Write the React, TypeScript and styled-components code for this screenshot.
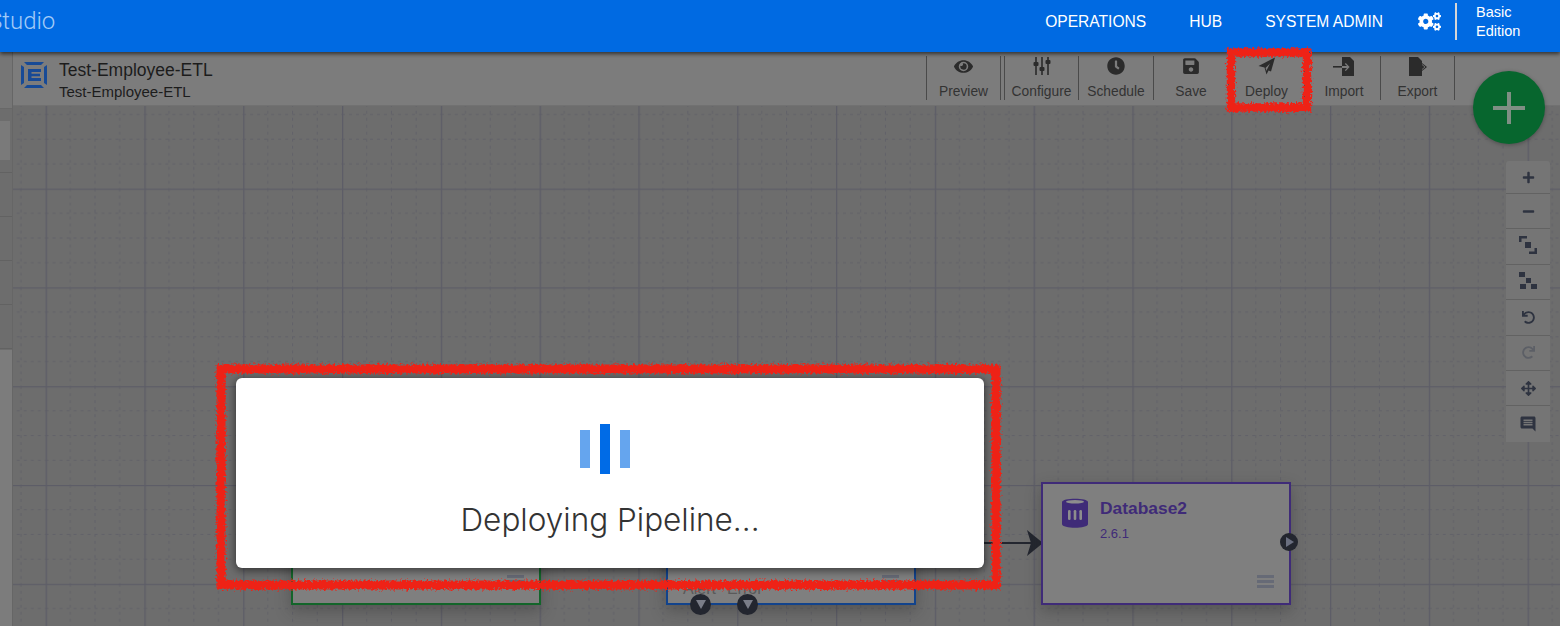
import { ReactNode } from "react";
import styled, { createGlobalStyle } from "styled-components";
import { FaArrowsAlt, FaClock, FaCogs, FaEye, FaMinus, FaPlus, FaRedo, FaSave, FaUndo } from "react-icons/fa";
import { MdMessage } from "react-icons/md";

const GlobalStyle = createGlobalStyle`
  html, body {
    margin: 0;
    padding: 0;
    background: #6d6d6d;
    font-family: "Liberation Sans", Arial, sans-serif;
  }
`;

const SlidersIcon = () => (
  <svg width="18" height="20" viewBox="0 0 18 20" fill="currentColor">
    <rect x="2.2" y="1" width="1.6" height="18" />
    <rect x="8.2" y="1" width="1.6" height="18" />
    <rect x="14.2" y="1" width="1.6" height="18" />
    <rect x="0.5" y="6" width="5" height="4" rx="1" />
    <rect x="6.5" y="11" width="5" height="4" rx="1" />
    <rect x="12.5" y="4" width="5" height="4" rx="1" />
  </svg>
);

const PlaneIcon = () => (
  <svg width="18" height="18" viewBox="0 0 18 18" fill="currentColor">
    <path d="M17 0.5 L0.5 9 L6.5 10.5 L8.5 17.5 L10.5 13.5 L13 14.5 Z M7.5 11 L12 6.5 L9 12.5 L8.8 14 Z" fillRule="evenodd" />
  </svg>
);

const ImportIcon = () => (
  <svg width="22" height="19" viewBox="0 0 22 19" fill="currentColor">
    <path d="M9 0 H17 L21 4 V19 H9 V11 H14 L11.8 13.2 L12.8 14 L16.6 10 L12.8 6 L11.8 6.9 L14 9 H9 Z" />
    <rect x="0" y="9" width="9" height="1.6" />
  </svg>
);

const ExportIcon = () => (
  <svg width="20" height="19" viewBox="0 0 20 19" fill="currentColor">
    <path d="M1 0 H10 L14 4 V6 L19 10 L14 14 V19 H1 Z" />
    <path d="M14 7.5 L17 10 L14 12.5" fill="none" stroke="#7c7c7c" strokeWidth="0.8" />
  </svg>
);

const FitIcon = () => (
  <svg width="18" height="22" viewBox="0 0 18 22" fill="currentColor">
    <path d="M0 0 H8 V2.5 H2.5 V6 H0 Z M18 18 H10 V15.5 H15.5 V12 H18 Z" />
    <rect x="6" y="6" width="6" height="6" />
  </svg>
);

const SquaresIcon = () => (
  <svg width="18" height="20" viewBox="0 0 18 20" fill="currentColor">
    <rect x="0" y="0" width="6" height="5" />
    <rect x="7" y="6" width="5" height="5" />
    <rect x="1" y="12" width="6" height="5" />
    <rect x="12" y="12" width="6" height="5" />
  </svg>
);

const DatabaseIcon = () => (
  <svg width="26" height="32" viewBox="0 0 26 32" fill="currentColor">
    <path d="M0 5 C0 0.5 26 0.5 26 5 V27 C26 32 0 32 0 27 Z" />
    <ellipse cx="13" cy="4.8" rx="9" ry="1.7" fill="#8d8d8d" />
    <rect x="6" y="13" width="2.6" height="10" rx="1.2" fill="#8d8d8d" />
    <rect x="11.7" y="13" width="2.6" height="10" rx="1.2" fill="#8d8d8d" />
    <rect x="17.4" y="13" width="2.6" height="10" rx="1.2" fill="#8d8d8d" />
  </svg>
);

const LogoIcon = () => (
  <svg width="26" height="26" viewBox="0 0 26 26" fill="#174a96">
    <path d="M3 0 H23 L20 3 H6 Z M3 26 H23 L20 23 H6 Z" />
    <path d="M0 3 L3 5 V21 L0 23 Z M26 3 L23 5 V21 L26 23 Z" />
    <path d="M7 7 H20 V10 H10.5 V11.8 H19 V14.2 H10.5 V16 H20 V19 H7 Z" />
  </svg>
);

const toolItems: { label: string; icon: ReactNode; width: number; gap?: boolean; inset?: number }[] = [
  { label: "Preview", icon: <FaEye size={19} />, width: 74 },
  { label: "Configure", icon: <SlidersIcon />, width: 75, gap: true },
  { label: "Schedule", icon: <FaClock size={18} />, width: 75 },
  { label: "Save", icon: <FaSave size={18} />, width: 75 },
  { label: "Deploy", icon: <PlaneIcon />, width: 76 },
  { label: "Import", icon: <ImportIcon />, width: 76, inset: 3 },
  { label: "Export", icon: <ExportIcon />, width: 74 },
];

const railItems: { icon: ReactNode; off?: boolean }[] = [
  { icon: <FaPlus size={13} /> },
  { icon: <FaMinus size={13} /> },
  { icon: <FitIcon /> },
  { icon: <SquaresIcon /> },
  { icon: <FaUndo size={13} /> },
  { icon: <FaRedo size={13} />, off: true },
  { icon: <FaArrowsAlt size={15} /> },
  { icon: <MdMessage size={18} style={{ transform: "scaleX(-1)" }} /> },
];

const App = () => {
  return (
    <Page>
      <GlobalStyle />
      <Header>
        <Brand>Studio</Brand>
        <Nav>
          <NavLink>OPERATIONS</NavLink>
          <NavLink>HUB</NavLink>
          <NavLink>SYSTEM ADMIN</NavLink>
        </Nav>
        <Gears>
          <FaCogs size={23} />
        </Gears>
        <EditionBox>
          Basic
          <br />
          Edition
        </EditionBox>
      </Header>
      <Body>
        <Sidebar>
          <SideHead />
          <SideStrip>
            <SideBlock />
          </SideStrip>
          <SideRow />
          <SideRow />
          <SideRow />
          <SideRow />
          <SideRest />
        </Sidebar>
        <Main>
          <Toolbar>
            <PipelineLogo>
              <LogoIcon />
            </PipelineLogo>
            <Titles>
              <Title>Test-Employee-ETL</Title>
              <Subtitle>Test-Employee-ETL</Subtitle>
            </Titles>
            <Tools>
              {toolItems.map((item) => (
                <Tool key={item.label} $gap={item.gap} $width={item.width} $inset={item.inset}>
                  <ToolIcon>{item.icon}</ToolIcon>
                  <ToolLabel>{item.label}</ToolLabel>
                </Tool>
              ))}
            </Tools>
          </Toolbar>
          <Canvas>
            <GridSvg width="100%" height="100%">
              <defs>
                <pattern id="grid" width="98.8" height="98.8" patternUnits="userSpaceOnUse" patternTransform="translate(32.6 82.6)">
                  {[24.7, 49.4, 74.1].map((p) => (
                    <g key={p} stroke="#616168" strokeWidth="1" strokeDasharray="3 4">
                      <line x1={p} y1="0" x2={p} y2="98.8" />
                      <line x1="0" y1={p} x2="98.8" y2={p} />
                    </g>
                  ))}
                  <line x1="0.5" y1="0" x2="0.5" y2="98.8" stroke="#5d5d67" strokeWidth="1.6" />
                  <line x1="0" y1="0.5" x2="98.8" y2="0.5" stroke="#5d5d67" strokeWidth="1.6" />
                </pattern>
              </defs>
              <rect width="100%" height="100%" fill="url(#grid)" />
            </GridSvg>

            <Node $x={278} $color="#13652a">
              <NodeMenu />
            </Node>
            <Node $x={653} $color="#12438c">
              <NodeMenu />
              <PortLabels>
                <span>Alert</span>
                <span>Error</span>
              </PortLabels>
              <BottomPort $left={22}>
                <svg width="10" height="9" viewBox="0 0 10 9"><path d="M0 0 H10 L5 9 Z" fill="#7a7d88" /></svg>
              </BottomPort>
              <BottomPort $left={69}>
                <svg width="10" height="9" viewBox="0 0 10 9"><path d="M0 0 H10 L5 9 Z" fill="#7a7d88" /></svg>
              </BottomPort>
            </Node>
            <Connector />
            <ArrowHead width="16" height="26" viewBox="0 0 16 26">
              <path d="M0 0 L16 13 L0 26 L4 13 Z" fill="#23262f" />
            </ArrowHead>
            <Node $x={1028} $color="#3f2b78">
              <NodeHead>
                <DatabaseIcon />
                <NodeCopy>
                  <NodeName>Database2</NodeName>
                  <NodeVersion>2.6.1</NodeVersion>
                </NodeCopy>
              </NodeHead>
              <NodeMenu />
              <SidePort>
                <svg width="8" height="10" viewBox="0 0 8 10"><path d="M0 0 L8 5 L0 10 Z" fill="#6a6f80" /></svg>
              </SidePort>
            </Node>

            <AddButton>
              <svg width="34" height="34" viewBox="0 0 34 34" fill="#7f8f84">
                <rect x="15" y="1" width="4" height="32" />
                <rect x="1" y="15" width="32" height="4" />
              </svg>
            </AddButton>
            <Rail>
              {railItems.map((item, i) => (
                <RailButton key={i} $off={item.off}>
                  {item.icon}
                </RailButton>
              ))}
            </Rail>
          </Canvas>
        </Main>
      </Body>

      <Modal>
        <Loader>
          <LoaderBar $tall={false} />
          <LoaderBar $tall />
          <LoaderBar $tall={false} />
        </Loader>
        <ModalText>Deploying Pipeline...</ModalText>
      </Modal>

      <Scribble width="1560" height="626" viewBox="0 0 1560 626">
        <defs>
          <filter id="rough" x="-5%" y="-5%" width="110%" height="110%">
            <feTurbulence type="fractalNoise" baseFrequency="0.45" numOctaves="3" seed="4" />
            <feDisplacementMap in="SourceGraphic" scale="7" />
          </filter>
        </defs>
        <g filter="url(#rough)" fill="none" stroke="#ee2419">
          <rect x="221" y="369" width="775" height="216" strokeWidth="9" />
          <rect x="1231" y="52.5" width="76" height="55" strokeWidth="8.5" />
        </g>
      </Scribble>
    </Page>
  );
};

const Page = styled.div`
  position: relative;
  width: 1560px;
  height: 626px;
  overflow: hidden;
  display: flex;
  flex-direction: column;
  background: #6d6d6d;
`;

const Header = styled.header`
  position: relative;
  z-index: 2;
  flex: 0 0 52px;
  display: flex;
  align-items: center;
  background: #006ae2;
  box-shadow: 0 2px 4px rgba(0, 0, 0, 0.6);
  color: #fff;
`;

const Brand = styled.div`
  margin-left: -12px;
  font-family: Roboto, sans-serif;
  font-size: 24px;
  font-weight: 300;
  color: #a3cbf7;
  position: relative;
  top: -5px;
`;

const Nav = styled.nav`
  margin-left: auto;
  display: flex;
  gap: 43px;
  position: relative;
  top: -4px;
`;

const NavLink = styled.a`
  font-size: 15.6px;
  color: #fff;
`;

const Gears = styled.div`
  display: flex;
  margin-left: 35px;
  position: relative;
  top: -5px;
`;

const EditionBox = styled.div`
  margin: -9px 0 0 14px;
  width: 105px;
  height: 37px;
  padding-left: 19px;
  box-sizing: border-box;
  border-left: 2px solid #d6d6d6;
  font-size: 14.5px;
  line-height: 19px;
`;

const Body = styled.div`
  flex: 1;
  display: flex;
  min-height: 0;
`;

const Sidebar = styled.aside`
  flex: 0 0 12px;
  display: flex;
  flex-direction: column;
  background: #6d6d6d;
  border-right: 1px solid #666;
`;

const SideHead = styled.div`
  height: 56px;
  background: #767676;
  border-bottom: 1px solid #686868;
`;

const SideStrip = styled.div`
  padding: 12px 2px 12px 0;
  border-bottom: 1px solid #626262;
`;

const SideBlock = styled.div`
  height: 39px;
  background: #7a7a7a;
`;

const SideRow = styled.div`
  height: 43px;
  border-bottom: 1px solid #626262;
`;

const SideRest = styled.div`
  flex: 1;
  margin-top: 1px;
  background: #7c7c7c;
`;

const Main = styled.main`
  flex: 1;
  display: flex;
  flex-direction: column;
  min-width: 0;
`;

const Toolbar = styled.div`
  flex: 0 0 54px;
  box-sizing: border-box;
  display: flex;
  align-items: flex-start;
  background: #7c7c7c;
  border-bottom: 1px solid #717171;
`;

const PipelineLogo = styled.div`
  display: flex;
  margin: 10px 0 0 8px;
`;

const Titles = styled.div`
  margin: 8px 0 0 12px;
`;

const Title = styled.div`
  font-size: 17.5px;
  line-height: 20px;
  color: #1c1c1c;
`;

const Subtitle = styled.div`
  font-size: 15px;
  line-height: 20px;
  margin-top: 2px;
  color: #1c1c1c;
`;

const Tools = styled.div`
  margin-left: auto;
  margin-right: 105px;
  display: flex;
  margin-top: 4px;
  border-left: 1px solid #4a4a4a;
`;

const Tool = styled.div<{ $gap?: boolean; $width: number; $inset?: number }>`
  width: ${(p) => p.$width}px;
  height: 44px;
  box-sizing: border-box;
  display: flex;
  flex-direction: column;
  align-items: center;
  justify-content: space-between;
  padding: 0 0 1px ${(p) => p.$inset ?? 0}px;
  border-right: 1px solid #4a4a4a;
  color: #2b2b2b;
  ${(p) => p.$gap && "margin-left: 3px; border-left: 1px solid #4a4a4a;"}
`;

const ToolIcon = styled.div`
  height: 20px;
  display: flex;
  align-items: center;
  justify-content: center;
`;

const ToolLabel = styled.div`
  font-size: 13.8px;
  line-height: 15px;
  color: #333;
`;

const Canvas = styled.div`
  position: relative;
  flex: 1;
  background: #6d6d6d;
  min-height: 0;
`;

const GridSvg = styled.svg`
  display: block;
  position: absolute;
  inset: 0;
`;

const Node = styled.div<{ $x: number; $color: string }>`
  position: absolute;
  left: ${(p) => p.$x}px;
  top: 376px;
  width: 250px;
  height: 123px;
  box-sizing: border-box;
  background: #7f7f7f;
  border: 2px solid ${(p) => p.$color};
  box-shadow: 0 6px 14px rgba(40, 40, 40, 0.35);
  color: ${(p) => p.$color};
`;

const NodeHead = styled.div`
  display: flex;
  gap: 12px;
  padding: 13px 0 0 19px;
`;

const NodeCopy = styled.div`
  margin-top: 1px;
`;

const NodeName = styled.div`
  font-size: 17.4px;
  font-weight: 700;
  line-height: 20px;
`;

const NodeVersion = styled.div`
  font-size: 13px;
  line-height: 14px;
  margin-top: 9px;
`;

const NodeMenu = styled.div`
  position: absolute;
  right: 15px;
  bottom: 15px;
  width: 17px;
  height: 13px;
  box-sizing: border-box;
  border-top: 3px solid #666a76;
  border-bottom: 3px solid #666a76;

  &::after {
    content: "";
    display: block;
    height: 3px;
    margin-top: 2px;
    background: #666a76;
  }
`;

const PortLabels = styled.div`
  position: absolute;
  left: 15px;
  bottom: 5px;
  display: flex;
  gap: 11px;
  font-size: 16px;
  color: #5a5a5a;
`;

const BottomPort = styled.div<{ $left: number }>`
  position: absolute;
  left: ${(p) => p.$left}px;
  bottom: -12px;
  width: 21px;
  height: 21px;
  border-radius: 50%;
  background: #23262f;
  display: flex;
  align-items: center;
  justify-content: center;
`;

const SidePort = styled.div`
  position: absolute;
  right: -9px;
  top: 49px;
  width: 18px;
  height: 18px;
  border-radius: 50%;
  background: #23262f;
  display: flex;
  align-items: center;
  justify-content: center;
  padding-left: 2px;
  box-sizing: border-box;
`;

const Connector = styled.div`
  position: absolute;
  left: 960px;
  top: 436px;
  width: 60px;
  height: 2px;
  background: #23262f;
`;

const ArrowHead = styled.svg`
  position: absolute;
  left: 1014px;
  top: 424px;
`;

const AddButton = styled.div`
  position: absolute;
  left: 1460px;
  top: -35px;
  width: 72px;
  height: 73px;
  border-radius: 50%;
  background: #07662e;
  display: flex;
  align-items: center;
  justify-content: center;
  box-shadow: 0 1px 4px rgba(0, 0, 0, 0.3);
`;

const Rail = styled.div`
  position: absolute;
  left: 1493px;
  top: 55px;
  width: 44px;
  border-radius: 3px 3px 0 0;
  background: #757575;
`;

const RailButton = styled.div<{ $off?: boolean }>`
  height: 35.4px;
  box-sizing: border-box;
  display: flex;
  align-items: center;
  justify-content: center;
  color: ${(p) => (p.$off ? "#5c5f66" : "#2e3340")};
  border-bottom: 1px solid #626262;

  &:first-child {
    height: 33px;
  }

  &:last-child {
    border-bottom: 0;
  }
`;

const Modal = styled.div`
  position: absolute;
  left: 236px;
  top: 378px;
  z-index: 3;
  width: 748px;
  height: 190px;
  box-sizing: border-box;
  border-radius: 6px;
  background: #fff;
  box-shadow: 0 2px 10px rgba(0, 0, 0, 0.6);
  display: flex;
  flex-direction: column;
  align-items: center;
  padding-top: 46px;
`;

const Loader = styled.div`
  display: flex;
  align-items: center;
  gap: 10px;
  height: 50px;
  margin-left: -10px;
`;

const LoaderBar = styled.div<{ $tall: boolean }>`
  width: 10px;
  height: ${(p) => (p.$tall ? 50 : 38)}px;
  background: ${(p) => (p.$tall ? "#006be6" : "#65a5ee")};
`;

const ModalText = styled.div`
  margin-top: 24px;
  font-family: Inter, sans-serif;
  font-size: 31.5px;
  font-weight: 300;
  line-height: 44px;
  color: #333;
`;

const Scribble = styled.svg`
  position: absolute;
  left: 0;
  top: 0;
  z-index: 4;
  pointer-events: none;
`;

export default App;
